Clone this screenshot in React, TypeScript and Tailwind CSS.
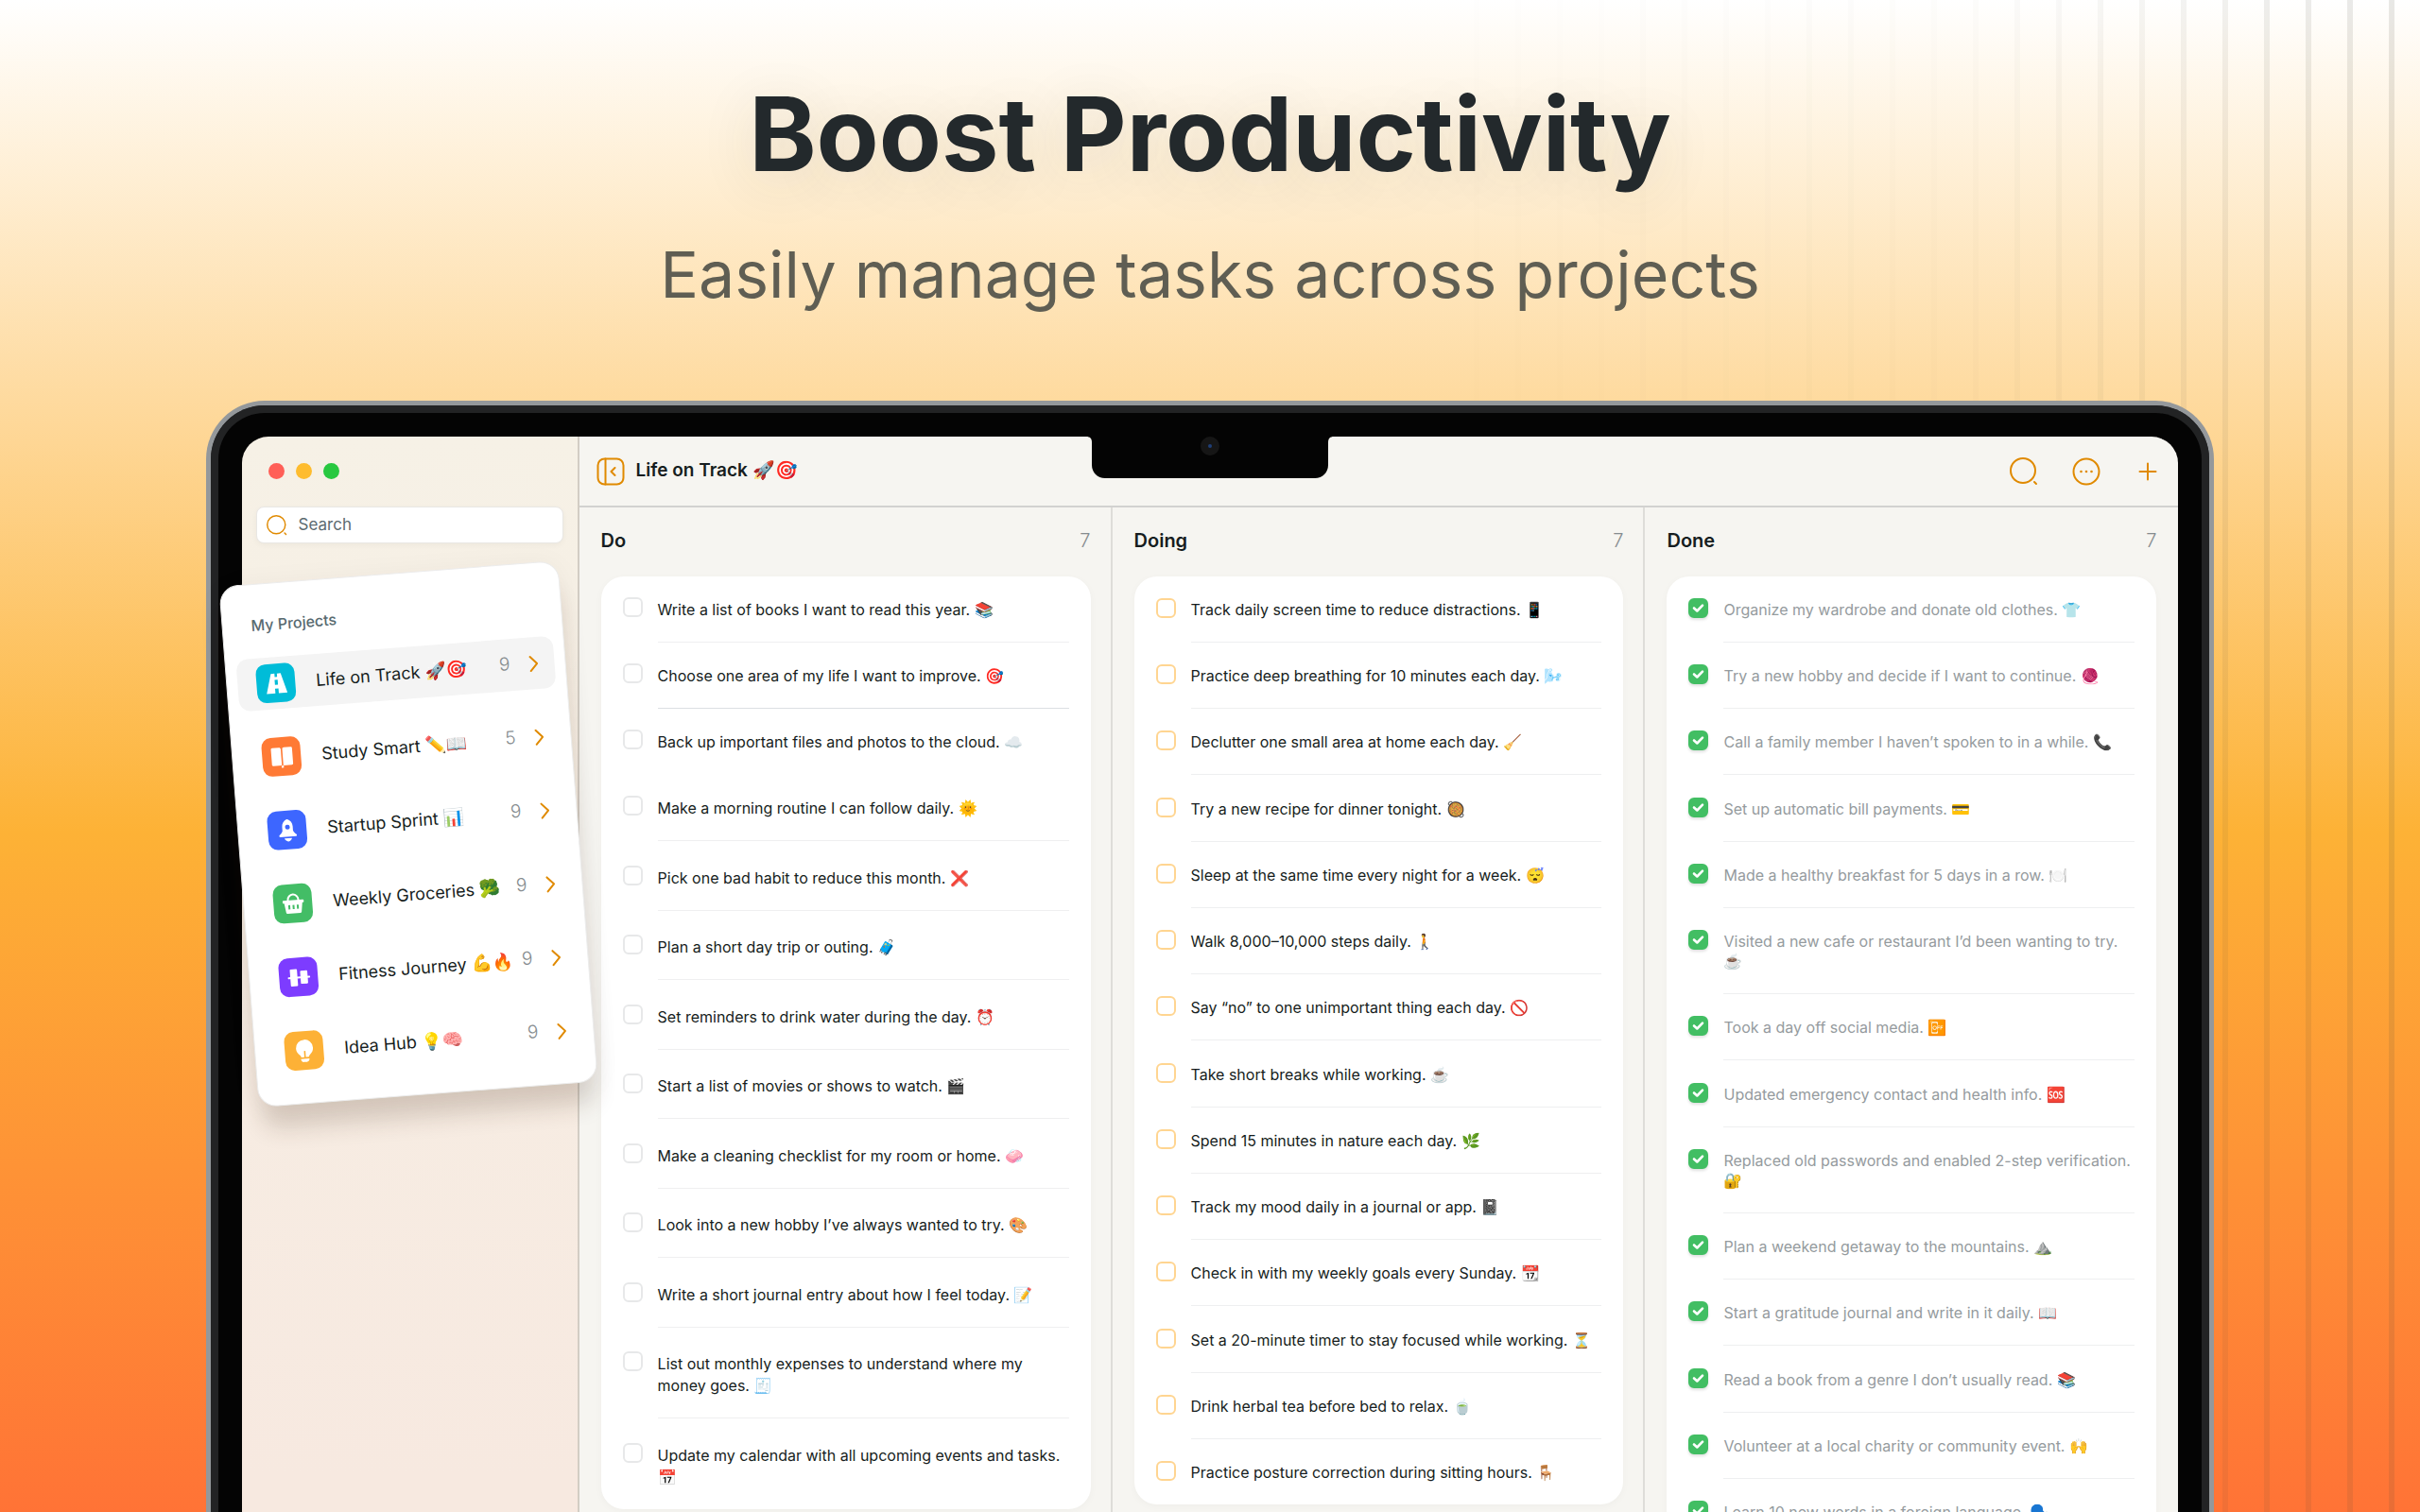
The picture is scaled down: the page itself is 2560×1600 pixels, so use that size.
import type { ReactNode } from 'react'
import clsx from 'clsx'

type Tone = 'do' | 'doing' | 'done'

const PROJECTS: { name: string; count: number; tile: string; icon: ReactNode }[] = [
  { name: 'Life on Track 🚀🎯', count: 9, tile: 'bg-[#00bcd8]', icon: <RoadIcon /> },
  { name: 'Study Smart ✏️📖', count: 5, tile: 'bg-[#ff7a35]', icon: <BookIcon /> },
  { name: 'Startup Sprint 📊', count: 9, tile: 'bg-[#3d66ff]', icon: <RocketIcon /> },
  { name: 'Weekly Groceries 🥦', count: 9, tile: 'bg-[#43bd66]', icon: <BasketIcon /> },
  { name: 'Fitness Journey 💪🔥', count: 9, tile: 'bg-[#7d3cff]', icon: <DumbbellIcon /> },
  { name: 'Idea Hub 💡🧠', count: 9, tile: 'bg-[#fdb136]', icon: <BulbIcon /> },
]

const COLUMNS: { tone: Tone; title: string; count: number; tasks: string[] }[] = [
  {
    tone: 'do',
    title: 'Do',
    count: 7,
    tasks: [
      'Write a list of books I want to read this year. 📚',
      'Choose one area of my life I want to improve. 🎯',
      'Back up important files and photos to the cloud. ☁️',
      'Make a morning routine I can follow daily. 🌞',
      'Pick one bad habit to reduce this month. ❌',
      'Plan a short day trip or outing. 🧳',
      'Set reminders to drink water during the day. ⏰',
      'Start a list of movies or shows to watch. 🎬',
      'Make a cleaning checklist for my room or home. 🧼',
      'Look into a new hobby I’ve always wanted to try. 🎨',
      'Write a short journal entry about how I feel today. 📝',
      'List out monthly expenses to understand where my\nmoney goes. 🧾',
      'Update my calendar with all upcoming events and tasks.\n📅',
    ],
  },
  {
    tone: 'doing',
    title: 'Doing',
    count: 7,
    tasks: [
      'Track daily screen time to reduce distractions. 📱',
      'Practice deep breathing for 10 minutes each day. 🌬️',
      'Declutter one small area at home each day. 🧹',
      'Try a new recipe for dinner tonight. 🥘',
      'Sleep at the same time every night for a week. 😴',
      'Walk 8,000–10,000 steps daily. 🚶',
      'Say “no” to one unimportant thing each day. 🚫',
      'Take short breaks while working. ☕',
      'Spend 15 minutes in nature each day. 🌿',
      'Track my mood daily in a journal or app. 📓',
      'Check in with my weekly goals every Sunday. 📆',
      'Set a 20-minute timer to stay focused while working. ⏳',
      'Drink herbal tea before bed to relax. 🍵',
      'Practice posture correction during sitting hours. 🪑',
    ],
  },
  {
    tone: 'done',
    title: 'Done',
    count: 7,
    tasks: [
      'Organize my wardrobe and donate old clothes. 👕',
      'Try a new hobby and decide if I want to continue. 🧶',
      'Call a family member I haven’t spoken to in a while. 📞',
      'Set up automatic bill payments. 💳',
      'Made a healthy breakfast for 5 days in a row. 🍽️',
      'Visited a new cafe or restaurant I’d been wanting to try.\n☕',
      'Took a day off social media. 📴',
      'Updated emergency contact and health info. 🆘',
      'Replaced old passwords and enabled 2-step verification.\n🔐',
      'Plan a weekend getaway to the mountains. ⛰️',
      'Start a gratitude journal and write in it daily. 📖',
      'Read a book from a genre I don’t usually read. 📚',
      'Volunteer at a local charity or community event. 🙌',
      'Learn 10 new words in a foreign language. 🗣️',
    ],
  },
]

function RoadIcon() {
  return (
    <svg viewBox="0 0 24 24" className="size-6 fill-white">
      <path d="M6.8 1.5h3.9v3.6h2.6V1.5h3.9L23 22.5h-9.2v-5.2h-3.6v5.2H1z" />
      <path d="M10.4 8.2h3.2v5.2h-3.2z" className="fill-[#00bcd8]" />
    </svg>
  )
}

function BookIcon() {
  return (
    <svg viewBox="0 0 24 24" className="size-6 fill-white">
      <path d="M2.2 2h7.2c1 0 1.8.7 1.8 1.6V21h-9c-.9 0-1.4-.5-1.4-1.3V3.4C.8 2.5 1.4 2 2.2 2z" />
      <path d="M21.8 2h-7.2c-1 0-1.8.7-1.8 1.6V21h9c.9 0 1.4-.5 1.4-1.3V3.4c0-.9-.6-1.4-1.4-1.4z" />
      <circle cx="12" cy="22.3" r="1.3" />
    </svg>
  )
}

function RocketIcon() {
  return (
    <svg viewBox="0 0 24 24" className="size-6 fill-white">
      <path
        fillRule="evenodd"
        d="M12 0c3.600 1.600 5.600 4.200 5.600 8v4.400c.6 1.900 2 3.200 3.400 4.200.7.700.3 2-.7 2H3.700c-1 0-1.400-1.300-.7-2 1.400-1 2.800-2.300 3.400-4.200V8C6.400 4.200 8.400 1.600 12 0zm0 6a2.500 2.500 0 1 0 0 5 2.500 2.500 0 0 0 0-5z"
      />
      <path d="M8 20.3h8c-.5 1.700-1.800 3-4 3.700-2.200-.7-3.500-2-4-3.700z" />
    </svg>
  )
}

function BasketIcon() {
  return (
    <svg viewBox="0 0 24 24" className="size-6">
      <path d="M6.500 9.500V7.500a5.500 5.500 0 0 1 11 0v2" fill="none" stroke="#fff" strokeWidth="2" />
      <path
        fill="#fff"
        fillRule="evenodd"
        d="M1.800 8h20.400c.6 0 1 .4 1 1v1c0 .6-.4 1-1 1h-.6l-1.400 9.600c-.1.900-.8 1.400-1.600 1.400H5.400c-.8 0-1.500-.5-1.600-1.400L2.400 11h-.6c-.6 0-1-.4-1-1V9c0-.6.4-1 1-1zM6.500 13v4.500h2V13zm4.500 0v4.500h2V13zm4.500 0v4.500h2V13z"
      />
    </svg>
  )
}

function DumbbellIcon() {
  return (
    <svg viewBox="0 0 24 24" className="size-6 fill-white">
      <rect x="0" y="11" width="24" height="2" rx="1" />
      <rect x="2.8" y="3" width="7.6" height="18" rx="1" />
      <rect x="13.6" y="5" width="7.6" height="14" rx="1" />
    </svg>
  )
}

function BulbIcon() {
  return (
    <svg viewBox="0 0 24 24" className="size-6 fill-white">
      <path d="M12 0a9 9 0 0 1 9 9c0 3.400-1.600 5.400-3.500 7-.8.800-1.300 1.500-1.500 2.500h-3.200V12h-1.600v6.500H8c-.2-1-.7-1.700-1.500-2.500C4.600 14.400 3 12.400 3 9a9 9 0 0 1 9-9z" />
      <path d="M7.500 20.300h9c0 2.200-1.200 3.400-3 3.400h-3c-1.800 0-3-1.200-3-3.400z" />
    </svg>
  )
}

function LensIcon({ className }: { className: string }) {
  return (
    <svg viewBox="0 0 30 30" fill="none" stroke="#e08a00" strokeWidth="2" strokeLinecap="round" className={className}>
      <circle cx="14" cy="14" r="13" />
      <path d="m26 26 2 2" />
    </svg>
  )
}

function ChevronIcon() {
  return (
    <svg viewBox="0 0 10 18" fill="none" stroke="#e08a00" strokeWidth="2" strokeLinecap="round" strokeLinejoin="round" className="h-[18px] w-[10px]">
      <path d="m1.500 1.500 7 7.500-7 7.500" />
    </svg>
  )
}

function Notch() {
  return (
    <svg viewBox="0 0 262 45" className="absolute left-1/2 top-0 h-[45px] w-[262px] -translate-x-1/2">
      <path d="M0 0c4 0 6 2 6 6v24c0 8 6 14 14 14h222c8 0 14-6 14-14V6c0-4 2-6 6-6z" fill="#040404" />
      <circle cx="131" cy="10" r="10" fill="#161616" />
      <circle cx="131" cy="10" r="2" fill="#1f3f78" />
    </svg>
  )
}

function Task({ text, tone }: { text: string; tone: Tone }) {
  const isDo = tone === 'do'
  const done = tone === 'done'
  return (
    <li
      className={clsx(
        'group',
        isDo ? 'pt-[22px] nth-[n+5]:odd:pt-[26px] nth-[n+5]:even:pt-[25px]' : 'pt-[23px] nth-[4n]:pt-[24px]',
      )}
    >
      <label className="flex items-start gap-4">
        <span className="grid shrink-0">
          <input
            type="checkbox"
            defaultChecked={done}
            className={clsx(
              'peer col-start-1 row-start-1 size-[21px] appearance-none rounded-md border-2',
              isDo && 'border-[#e7e8e9]',
              tone === 'doing' && 'border-[#ffd591]',
              done && 'border-[#42be63] shadow-[0_2px_3px_rgba(0,0,0,0.12)] checked:bg-[#42be63]',
            )}
          />
          <svg
            viewBox="0 0 21 21"
            className="pointer-events-none invisible col-start-1 row-start-1 size-[21px] fill-none stroke-white stroke-[2.6] peer-checked:visible"
            strokeLinecap="round"
            strokeLinejoin="round"
          >
            <path d="m6 10.500 3.300 3L15 7.700" />
          </svg>
        </span>
        <span
          className={clsx(
            'flex-1 whitespace-pre border-b pt-[2px] group-last:border-0',
            isDo
              ? 'border-[#efeff0] pb-[22px] leading-[23px] group-nth-2:border-[#dcdfe2] group-nth-3:border-white'
              : 'border-[#eeeff0] pb-[23px] leading-[21px]',
            done ? 'text-[#959b9e]' : 'text-[#161d20]',
          )}
        >
          {text}
        </span>
      </label>
    </li>
  )
}

function Sidebar() {
  return (
    <aside className="w-[357px] shrink-0 rounded-tl-[28px] border-r-2 border-[#d3cdc4] bg-linear-to-b/srgb from-[#f6f1e6] to-[#f7e9e0] to-[1100px]">
      <div className="flex gap-3 px-7 pt-[28px]">
        <span className="size-[17px] rounded-full bg-[#ff5f57]" />
        <span className="size-[17px] rounded-full bg-[#febc2e]" />
        <span className="size-[17px] rounded-full bg-[#28c840]" />
      </div>

      <label className="mx-[15px] mt-[29px] flex h-[39px] items-center gap-3 rounded-lg border border-[#e9e7e4] bg-white px-[10px] shadow-[0_2px_6px_rgba(0,0,0,0.04)]">
        <LensIcon className="size-[22px] shrink-0" />
        <input
          type="search"
          placeholder="Search"
          aria-label="Search"
          className="w-full bg-transparent text-[17px] text-[#5c6a70] outline-none placeholder:text-[#5c6a70]"
        />
      </label>

      <nav
        aria-label="My Projects"
        className="relative z-10 -ml-1 -mr-px mt-[31px] -rotate-[4.4deg] rounded-[20px] border border-[#ececec] bg-white px-[11px] pt-[31px] pb-[28px] shadow-[0_28px_24px_-4px_rgba(60,40,20,0.16),0_4px_30px_rgba(60,40,20,0.05)]"
      >
        <h2 className="px-[19px] text-base leading-6 font-medium text-[#586a70]">My Projects</h2>
        <ul className="mt-[23px] flex flex-col gap-[23px]">
          {PROJECTS.map((p, i) => (
            <li key={p.name}>
              <a
                href="#"
                className={clsx('flex h-[55px] items-center rounded-xl pl-5 pr-[17px]', i === 0 && 'bg-[#f4f4f4]')}
              >
                <span className={clsx('grid size-[41px] shrink-0 place-items-center rounded-[10px]', p.tile)}>
                  {p.icon}
                </span>
                <span className="ml-[22px] flex-1 whitespace-nowrap text-lg text-[#161d20]">{p.name}</span>
                <span className="mr-5 text-[19px] font-light text-[#868c8f]">{p.count}</span>
                <ChevronIcon />
              </a>
            </li>
          ))}
        </ul>
      </nav>
    </aside>
  )
}

function Toolbar() {
  return (
    <header className="flex h-[75px] items-center border-b-2 border-[#d2d2d0] pl-[18px] pr-[22px]">
      <button type="button" aria-label="Toggle sidebar">
        <svg viewBox="0 0 30 30" fill="none" stroke="#e08a00" strokeWidth="2" strokeLinecap="round" strokeLinejoin="round" className="size-[30px]">
          <rect x="1.5" y="1.5" width="27" height="27" rx="7" />
          <path d="M9.500 1.500v27M19.500 11l-4 4 4 4" />
        </svg>
      </button>
      <h2 className="ml-3 text-[19px] font-semibold text-[#161d20]">Life on Track 🚀🎯</h2>
      <div className="ml-auto flex items-center gap-9">
        <button type="button" aria-label="Search tasks">
          <LensIcon className="size-[30px]" />
        </button>
        <button type="button" aria-label="More">
          <svg viewBox="0 0 30 30" fill="none" stroke="#e08a00" strokeWidth="2" className="size-[30px]">
            <circle cx="15" cy="15" r="13.5" />
            <g fill="#e08a00" stroke="none">
              <circle cx="9.5" cy="15" r="1.3" />
              <circle cx="15" cy="15" r="1.3" />
              <circle cx="20.5" cy="15" r="1.3" />
            </g>
          </svg>
        </button>
        <button type="button" aria-label="Add task" className="ml-1">
          <svg viewBox="0 0 20 20" fill="none" stroke="#e08a00" strokeWidth="2" strokeLinecap="round" className="size-5">
            <path d="M10 1.500v17M1.500 10h17" />
          </svg>
        </button>
      </div>
    </header>
  )
}

export default function App() {
  return (
    <div className="relative flex h-screen flex-col overflow-hidden bg-linear-to-b/srgb from-white via-[#fdb236] via-55% to-[#ff7336] font-[Inter,sans-serif]">
      <div className="absolute inset-y-0 right-0 w-[47%] bg-[repeating-linear-gradient(to_left,transparent_0_27px,#4b4a3c_27px_33px,transparent_33px_44px)] [mask-image:linear-gradient(to_left,black,rgba(0,0,0,0.12)_38%,transparent)] opacity-13" />

      <div className="relative pt-[78px] pb-[94px] text-center">
        <h1 className="text-[108px] leading-[128px] font-bold text-[#23292c] [text-shadow:0_10px_60px_rgba(60,60,40,0.12)]">
          Boost Productivity
        </h1>
        <p className="mt-11 text-[68px] leading-[80px] text-[#5f5e53]">Easily manage tasks across projects</p>
      </div>

      {/* Laptop: metal edge, rubber rim, black bezel */}
      <div className="relative mx-auto flex w-[83%] shrink-0 grow flex-col rounded-t-[62px] border-5 border-b-0 border-[#94989b] bg-[#222324]">
        <div className="flex grow flex-col rounded-t-[57px] border-8 border-b-0 border-[#222324] bg-[#040404] px-[25px] pt-[25px]">
          <div className="relative flex grow">
            <Sidebar />
            <main className="min-w-0 flex-1 rounded-tr-[28px] bg-[#f6f5f1]">
              <Toolbar />
              <div className="flex">
                {COLUMNS.map((col) => (
                  <section
                    key={col.title}
                    className="min-w-0 flex-1 border-r-2 border-[#deddd9] pl-[23px] pr-[21px] pb-8 last:border-0 last:pr-[23px]"
                  >
                    <div className="mb-[3px] flex h-[70px] items-center justify-between text-[20px]">
                      <h3 className="font-semibold text-[#161d20]">{col.title}</h3>
                      <span className="font-light text-[#868c8f]">{col.count}</span>
                    </div>
                    <ul className="rounded-3xl bg-white px-[23px] text-base shadow-[0_2px_8px_rgba(0,0,0,0.03)]">
                      {col.tasks.map((t) => (
                        <Task key={t} text={t} tone={col.tone} />
                      ))}
                    </ul>
                  </section>
                ))}
              </div>
            </main>
            <Notch />
          </div>
        </div>
      </div>
    </div>
  )
}
